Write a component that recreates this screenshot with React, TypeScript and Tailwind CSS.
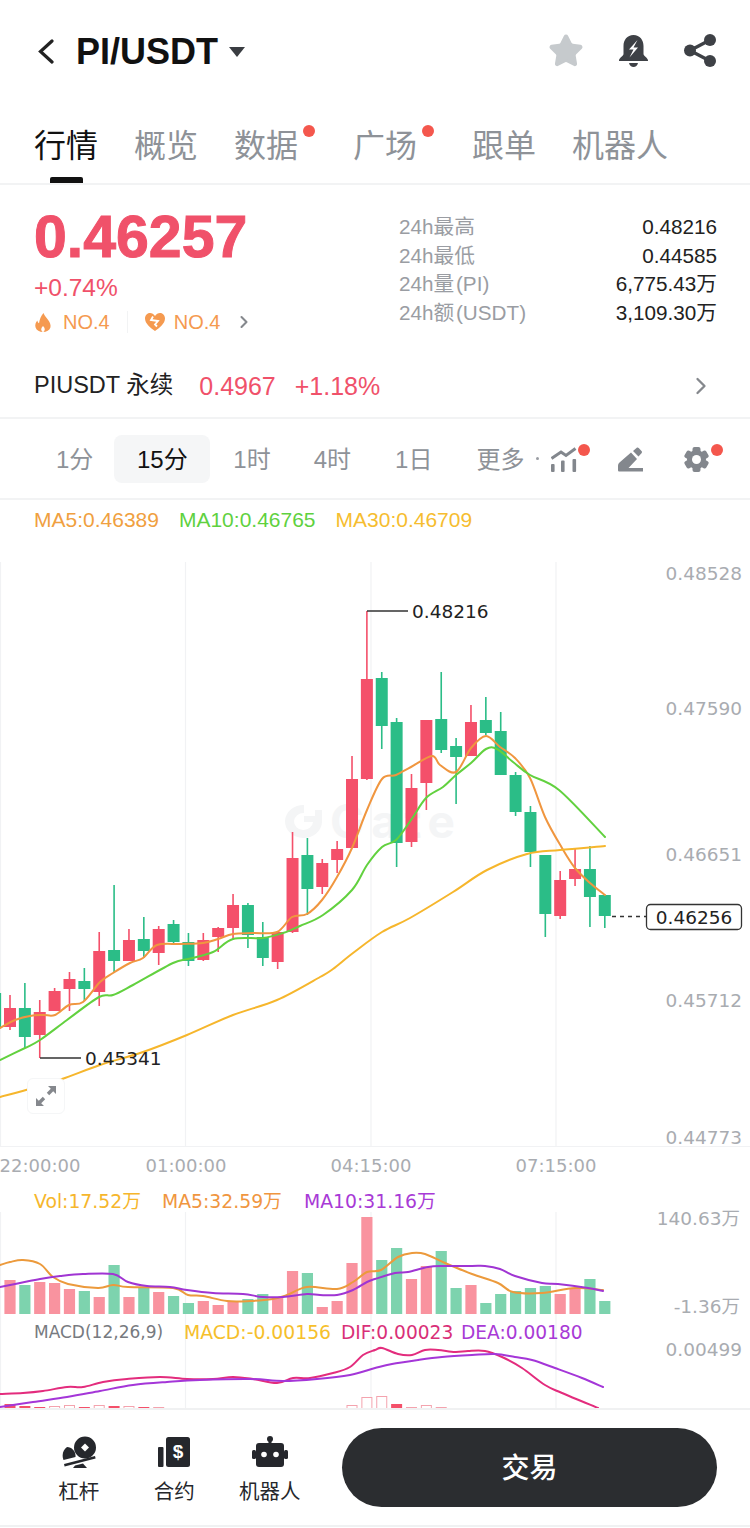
import { Star, ChevronRight } from 'lucide-react';

const UP = '#f4506a';
const DOWN = '#2bbd87';
const UP_VOL = '#f9939f';
const DOWN_VOL = '#7dd3ae';
const SANS = 'font-["Liberation_Sans","Noto_Sans_CJK_SC",sans-serif]';
const CHART_FONT = '"DejaVu Sans","Noto Sans CJK SC",sans-serif';

const tabs = [
  { label: '行情', active: true },
  { label: '概览' },
  { label: '数据', dot: true },
  { label: '广场', dot: true },
  { label: '跟单' },
  { label: '机器人' },
];

const stats = [
  ['24h最高', '0.48216'],
  ['24h最低', '0.44585'],
  ['24h量 (PI)', '6,775.43万'],
  ['24h额 (USDT)', '3,109.30万'],
];

// candle index -1 starts just off the left edge; [up, wickTop, wickBottom, bodyTop, bodyBottom]
type Candle = [boolean, number, number, number, number];
const candles: Candle[] = [
  [false, 993, 1030, 993, 1028],
  [true, 995, 1030, 1008, 1027],
  [false, 983, 1048, 1008, 1037],
  [true, 1000, 1058, 1012, 1035],
  [true, 988, 1011, 991, 1011],
  [true, 972, 1011, 979, 989],
  [false, 968, 1001, 981, 989],
  [true, 932, 1006, 951, 992],
  [false, 885, 973, 950, 961],
  [true, 929, 961, 940, 961],
  [false, 917, 958, 939, 951],
  [true, 926, 965, 929, 953],
  [false, 920, 943, 924, 942],
  [false, 933, 966, 942, 961],
  [true, 933, 961, 940, 960],
  [true, 927, 952, 928, 937],
  [true, 894, 940, 905, 928],
  [false, 903, 948, 905, 935],
  [false, 922, 966, 937, 958],
  [true, 932, 969, 932, 962],
  [true, 832, 933, 858, 932],
  [false, 838, 915, 855, 889],
  [true, 859, 894, 863, 887],
  [true, 841, 873, 849, 860],
  [true, 756, 848, 779, 848],
  [true, 611, 780, 679, 779],
  [false, 672, 749, 678, 726],
  [false, 718, 867, 722, 843],
  [true, 774, 847, 788, 842],
  [true, 720, 810, 720, 783],
  [false, 672, 753, 719, 750],
  [false, 738, 804, 746, 757],
  [true, 705, 756, 722, 756],
  [false, 697, 735, 720, 733],
  [false, 712, 775, 731, 775],
  [false, 772, 816, 775, 812],
  [false, 806, 867, 812, 852],
  [false, 855, 937, 855, 914],
  [true, 871, 919, 880, 916],
  [true, 848, 886, 869, 879],
  [false, 846, 927, 869, 897],
  [false, 895, 928, 895, 916],
];
const candleX = (i: number) => 10 + 14.87 * (i - 1);

const ma5 = '0,1028 15,1020 30,1016 43,1015 55,1015 69,1005 83,1002 100,982 113,973 130,963 143,958 157,945 180,944 203,943 218,939 233,934 253,933 277,932 292,917 307,914 322,900 337,877 352,848 367,810 382,779 396,775 411,767 432,756 440,765 456,772 471,748 486,736 500,747 515,758 530,778 545,817 562,848 575,868 590,883 605,895';
const ma10 = '0,1060 25,1048 40,1040 67,1020 99,997 113,995 133,985 173,963 188,959 213,952 233,939 263,938 283,933 300,926 323,915 352,890 367,865 382,847 396,840 411,820 426,798 443,787 456,775 471,763 486,749 497,749 513,762 530,775 559,790 605,837';
const ma30 = '0,1097 33,1088 62,1079 100,1065 143,1052 187,1035 233,1015 277,1000 320,977 333,969 353,953 382,932 410,918 453,892 487,870 527,854 560,850 605,846';

// top of each volume bar, baseline is y = 1314
const volumes: [boolean, number][] = [
  [true, 1280], [false, 1285], [true, 1282], [true, 1283], [true, 1289], [false, 1291],
  [true, 1297], [false, 1265], [true, 1297], [false, 1287], [true, 1292], [false, 1296],
  [false, 1303], [true, 1301], [true, 1305], [true, 1301], [false, 1299], [false, 1294],
  [true, 1297], [true, 1271], [false, 1273], [true, 1307], [true, 1301], [true, 1263],
  [true, 1217], [false, 1260], [false, 1248], [true, 1279], [true, 1266], [false, 1251],
  [false, 1288], [true, 1285], [false, 1303], [false, 1294], [false, 1291], [false, 1288],
  [false, 1286], [true, 1294], [true, 1288], [false, 1279], [false, 1301],
];

const volMa5 = '0,1265 10,1262 23,1260 40,1264 53,1277 68,1284 98,1288 113,1285 128,1287 173,1288 188,1295 203,1296 227,1301 250,1301 273,1299 287,1295 307,1287 337,1289 353,1282 367,1272 381,1270 398,1257 412,1253 425,1254 445,1263 472,1274 498,1283 513,1292 542,1293 575,1288 603,1290';
const volMa10 = '0,1287 20,1283 40,1279 60,1276 83,1274 113,1274 128,1282 147,1286 170,1287 187,1290 213,1293 243,1294 263,1297 283,1297 307,1294 320,1295 337,1295 353,1290 367,1282 375,1279 395,1273 408,1272 428,1267 445,1266 472,1266 485,1266 500,1269 515,1276 542,1283 558,1284 588,1288 603,1291';
const dif = '0,1394 23,1393 43,1391 67,1387 83,1387 103,1382 127,1379 160,1377 187,1379 213,1379 233,1377 253,1379 277,1383 293,1378 310,1378 333,1373 350,1367 363,1355 375,1350 382,1348 398,1354 412,1355 425,1350 438,1350 455,1352 468,1351 485,1351 502,1357 522,1368 545,1385 562,1393 598,1408';
const dea = '0,1407 33,1402 67,1397 100,1391 133,1385 167,1382 200,1380 250,1379 283,1381 317,1379 350,1375 375,1368 392,1364 418,1360 442,1357 472,1355 495,1354 515,1357 532,1360 555,1368 582,1378 603,1387';

// MACD histogram along the bottom edge: [candle index, top, filled]
const histogram: [number, number, boolean][] = [
  [1, 1404, true], [2, 1406, true], [3, 1407, true], [4, 1406, false], [5, 1405, false],
  [6, 1407, true], [7, 1405, false], [8, 1406, true], [9, 1406, false], [10, 1407, true],
  [11, 1407, false], [24, 1405, false], [25, 1397, false], [26, 1396, false], [27, 1404, true],
  [28, 1407, false], [29, 1405, false], [30, 1407, false],
];

const priceAxis: [string, number][] = [
  ['0.48528', 573], ['0.47590', 708], ['0.46651', 854], ['0.45712', 1000], ['0.44773', 1137],
];
const timeAxis: [string, number][] = [
  ['22:00:00', 40], ['01:00:00', 186], ['04:15:00', 371], ['07:15:00', 556],
];
const gridX = [0.5, 185.5, 371, 556];

// Catmull-Rom through the sampled points so the averages curve like a real chart
function smoothPath(points: string) {
  const p = points.split(' ').map((s) => s.split(',').map(Number));
  let d = `M${p[0][0]} ${p[0][1]}`;
  for (let i = 0; i < p.length - 1; i++) {
    const a = p[Math.max(i - 1, 0)];
    const b = p[i];
    const c = p[i + 1];
    const e = p[Math.min(i + 2, p.length - 1)];
    const c1x = b[0] + (c[0] - a[0]) / 6;
    const c1y = b[1] + (c[1] - a[1]) / 6;
    const c2x = c[0] - (e[0] - b[0]) / 6;
    const c2y = c[1] - (e[1] - b[1]) / 6;
    d += `C${c1x.toFixed(1)} ${c1y.toFixed(1)} ${c2x.toFixed(1)} ${c2y.toFixed(1)} ${c[0]} ${c[1]}`;
  }
  return d;
}

function ChartLabel({ x, y, fill, anchor, size, children }: { x: number; y: number; fill: string; anchor?: 'start' | 'middle' | 'end'; size?: number; children: string }) {
  return (
    <text x={x} y={y} fill={fill} textAnchor={anchor ?? 'start'} dominantBaseline="central" fontSize={size ?? 18.5} fontFamily={CHART_FONT}>
      {children}
    </text>
  );
}

function Line({ points, color }: { points: string; color: string }) {
  return <path d={smoothPath(points)} fill="none" stroke={color} strokeWidth="2" strokeLinejoin="round" strokeLinecap="round" />;
}

function Chart() {
  return (
    <svg width="750" height="868" viewBox="0 540 750 868" className="block">
      {gridX.map((x) => (
        <g key={x} stroke="#f1f2f4" strokeWidth="1.2">
          <line x1={x} x2={x} y1={562} y2={1146} />
          <line x1={x} x2={x} y1={1212} y2={1408} />
        </g>
      ))}
      <line x1={0} x2={750} y1={1146.5} y2={1146.5} stroke="#f1f2f4" strokeWidth="1.2" />

      {/* watermark */}
      <g fill="#f4f5f6">
        <path d="M322 822a18.500 16.500 0 1 1-18-17v8a9.500 8.500 0 1 0 9 9Z" />
        <path d="M304 822h18v-12h-7v6h-11Z" />
        <text x="330" y="838" fontSize="46" fontWeight="700" textLength="125" fontFamily="Inter, sans-serif">Gate</text>
      </g>

      {/* candles */}
      {candles.map(([up, wt, wb, bt, bb], i) => {
        const x = candleX(i);
        const color = up ? UP : DOWN;
        return (
          <g key={i} fill={color}>
            <rect x={x - 0.8} y={wt} width={1.6} height={wb - wt} />
            <rect x={x - 6} y={bt} width={12} height={bb - bt} />
          </g>
        );
      })}
      <Line points={ma5} color="#f0963f" />
      <Line points={ma10} color="#62d13f" />
      <Line points={ma30} color="#f6b62c" />

      {/* high / low markers */}
      <path d="M367 611h41M40 1058h41" stroke="#333" strokeWidth="1.5" fill="none" />
      <ChartLabel x={412} y={611} fill="#222">0.48216</ChartLabel>
      <ChartLabel x={85} y={1058} fill="#222">0.45341</ChartLabel>

      {/* last price tag */}
      <line x1={612} x2={646} y1={916.5} y2={916.5} stroke="#333" strokeWidth="1.3" strokeDasharray="4 4" />
      <rect x={646.5} y={904.5} width={95} height={25} rx={4} fill="#fff" stroke="#333" strokeWidth="1.3" />
      <ChartLabel x={694} y={917} fill="#222" anchor="middle">0.46256</ChartLabel>

      {priceAxis.map(([label, y]) => (
        <ChartLabel key={label} x={742} y={y} fill="#a9acb1" anchor="end">{label}</ChartLabel>
      ))}
      {timeAxis.map(([label, x]) => (
        <ChartLabel key={label} x={x} y={1165} fill="#a9acb1" anchor="middle" size={18}>{label}</ChartLabel>
      ))}

      {/* volume pane */}
      <ChartLabel x={34} y={1201} fill="#f6b62c" size={18.8}>Vol:17.52万</ChartLabel>
      <ChartLabel x={162} y={1201} fill="#f0963f" size={18.8}>MA5:32.59万</ChartLabel>
      <ChartLabel x={304} y={1201} fill="#a83ad6" size={18.8}>MA10:31.16万</ChartLabel>
      {volumes.map(([up, top], i) => (
        <rect key={i} x={candleX(i + 1) - 5.6} y={top} width={11.2} height={1314 - top} fill={up ? UP_VOL : DOWN_VOL} />
      ))}
      <Line points={volMa5} color="#ec9a3c" />
      <Line points={volMa10} color="#a035d3" />
      <ChartLabel x={740} y={1218} fill="#a9acb1" anchor="end">140.63万</ChartLabel>
      <ChartLabel x={740} y={1306} fill="#a9acb1" anchor="end">-1.36万</ChartLabel>

      {/* MACD pane */}
      <ChartLabel x={34} y={1332} fill="#777a80" size={17}>MACD(12,26,9)</ChartLabel>
      <ChartLabel x={184} y={1332} fill="#f6bf2c" size={18.8}>MACD:-0.00156</ChartLabel>
      <ChartLabel x={341} y={1332} fill="#d92f78" size={18.6}>DIF:0.00023</ChartLabel>
      <ChartLabel x={461} y={1332} fill="#a83ad6" size={18.6}>DEA:0.00180</ChartLabel>
      <ChartLabel x={742} y={1349} fill="#a9acb1" anchor="end">0.00499</ChartLabel>
      {histogram.map(([i, top, filled]) =>
        filled ? (
          <rect key={i} x={candleX(i) - 5.5} y={top} width={11} height={1408 - top} fill={UP} />
        ) : (
          <rect key={i} x={candleX(i) - 5} y={top + 0.5} width={10} height={1409 - top} fill="#fff" stroke="#f4a3ae" />
        ),
      )}
      <Line points={dif} color="#e32c7d" />
      <Line points={dea} color="#a436d8" />
    </svg>
  );
}

function BackIcon() {
  return (
    <svg width="17" height="25" viewBox="0 0 17 25">
      <path d="M15 2 3.500 12.500 15 23" fill="none" stroke="#222" strokeWidth="3.200" strokeLinecap="round" />
    </svg>
  );
}

function BellIcon() {
  return (
    <svg width="29" height="32" viewBox="0 0 29 32">
      <path fill="#3e4146" d="M14.500 0C21 0 24.500 5 24.500 11v8c0 2 4.500 4 4.500 6.500v.5H0v-.5C0 23 4.500 21 4.500 19v-8C4.500 5 8 0 14.500 0Z" />
      <path fill="#3e4146" d="M10 28h9c-.5 2.500-2.500 4-4.500 4S10.500 30.500 10 28Z" />
      <path fill="#fff" d="M18.500 5 10 14.500h4.500L10.500 22.500l8.500-10h-4.500L18.500 5Z" />
    </svg>
  );
}

function ShareIcon() {
  return (
    <svg width="32" height="33" viewBox="0 0 32 33">
      <path d="M26 6 6 16.500 26 27" fill="none" stroke="#3e4146" strokeWidth="3.400" />
      <circle cx="26" cy="6" r="6" fill="#3e4146" />
      <circle cx="6" cy="16.500" r="6" fill="#3e4146" />
      <circle cx="26" cy="27" r="6" fill="#3e4146" />
    </svg>
  );
}

function FlameIcon() {
  return (
    <svg width="18" height="19" viewBox="0 0 18 19">
      <path fill="#f59a50" d="M9.500 0c1 3 3 4.500 5 7.500 1.300 2 2.600 4.500 1.900 7-.9 2.800-3.900 4.500-7.400 4.500S2.500 17.300 1.600 14.500C.8 12 1.500 9.500 3.500 7.500c0 1.300.6 2.300 1.500 2.800C5.500 6.300 7 3 9.500 0Z" />
      <path fill="#fff" d="M9 13c.9.900 1.700 2 1.700 3.300S10 19 9 19s-1.700-1.400-1.700-2.700S8.100 13.900 9 13Z" />
    </svg>
  );
}

function BrokenHeartIcon() {
  return (
    <svg width="20" height="18" viewBox="0 0 20 18">
      <path fill="#f59a50" d="M10 3C11.300 1 13 0 15 0c3 0 5 2.500 5 5.500 0 5-5.500 9.500-10 12.500C5.500 15 0 10.500 0 5.500 0 2.500 2 0 5 0c2 0 3.700 1 5 3Z" />
      <path fill="none" stroke="#fff" strokeWidth="1.800" d="M8 3.500l-2 3.500 7 1-3 3.500 2 2" />
    </svg>
  );
}

function IndicatorIcon() {
  return (
    <svg width="26" height="25" viewBox="0 0 26 25" fill="#83878d">
      <path d="M.5 11.500 10 5l5 3.500L24.500 1.500" fill="none" stroke="#83878d" strokeWidth="3" />
      <rect x="0" y="17" width="3.600" height="8" rx="1" />
      <rect x="10" y="13.500" width="3.600" height="11.500" rx="1" />
      <rect x="21.500" y="12" width="3.600" height="13" rx="1" />
    </svg>
  );
}

function PencilIcon() {
  return (
    <svg width="25" height="25" viewBox="0 0 25 25" fill="#83878d">
      <path d="M1.500 15.500 13 5.500l6 6.500-8.500 9H25v3.500H1.500C.6 24.500 0 24 0 23v-4c0-1.400.5-2.600 1.500-3.500Z" />
      <path d="M15 4l3.500-3c.7-.6 1.500-.6 2.200.1l2.800 2.900c.7.7.6 1.500 0 2.200l-3 3.300L15 4Z" />
    </svg>
  );
}

function GearIcon() {
  return (
    <svg width="25" height="25" viewBox="0 0 25 25" fill="#83878d">
      <circle cx="12.500" cy="12.500" r="9.500" />
      {[0, 60, 120, 180, 240, 300].map((deg) => (
        <rect key={deg} x="8.500" y="0" width="8" height="6" rx="2" transform={`rotate(${deg} 12.500 12.500)`} />
      ))}
      <circle cx="12.500" cy="12.500" r="4.500" fill="#fff" />
    </svg>
  );
}

function RedDot({ className }: { className: string }) {
  return <span className={`absolute size-[12px] rounded-full bg-[#f4574d] ${className}`} />;
}

function LeverageIcon() {
  return (
    <svg width="34" height="32" viewBox="0 0 34 32" fill="#25272c">
      <path fillRule="evenodd" d="M23 .5a11 11 0 1 1 0 22 11 11 0 0 1 0-22Zm0 7-4 4 4 4 4-4-4-4Z" />
      <path d="M5 11c5 0 9 4.500 8.500 10L1.500 24C-.5 19 1 14 5 11Z" />
      <path d="M2 28 33 20l.6 2.400L2.600 30.400Z" />
      <path d="M13 29.500l8-2 4 4.500H11Z" />
    </svg>
  );
}

function ContractIcon() {
  return (
    <svg width="32" height="30" viewBox="0 0 32 30" fill="#25272c">
      <rect x="0" y="10" width="5.500" height="20" rx="1" />
      <rect x="8" y="0" width="24" height="30" rx="2.500" />
      <text x="20" y="21" textAnchor="middle" fontSize="19" fontWeight="700" fill="#fff" fontFamily="Liberation Sans, sans-serif">$</text>
    </svg>
  );
}

function RobotIcon() {
  return (
    <svg width="36" height="31" viewBox="0 0 36 31" fill="#25272c">
      <circle cx="18" cy="3" r="3" />
      <rect x="16.500" y="4" width="3" height="5" />
      <rect x="4" y="7" width="28" height="24" rx="3" />
      <rect x="0" y="14" width="4" height="9" rx="1.500" />
      <rect x="32" y="14" width="4" height="9" rx="1.500" />
      <circle cx="12" cy="18.500" r="2.800" fill="#fff" />
      <circle cx="24" cy="18.500" r="2.800" fill="#fff" />
    </svg>
  );
}

export default function App() {
  return (
    <div className={`relative flex h-[1528px] w-[750px] flex-col overflow-hidden bg-white ${SANS}`}>
      {/* Title bar */}
      <header className="flex h-[100px] items-center pt-[1px] pr-[34px] pl-[37px]">
        <span className="flex pt-[1px]"><BackIcon /></span>
        <h1 className="mt-[3px] ml-[22px] text-[36px] leading-none font-bold text-[#111]">PI/USDT</h1>
        <span className="mt-[3px] ml-[11px] h-0 w-0 border-x-[8px] border-t-[10px] border-x-transparent border-t-[#3a3d42]" />
        <div className="ml-auto flex items-center">
          <Star className="size-[36px] fill-[#c6cacd] text-[#c6cacd]" strokeWidth={2} />
          <span className="mr-[36px] ml-[35px] flex"><BellIcon /></span>
          <ShareIcon />
        </div>
      </header>

      {/* Tabs */}
      <nav className="flex h-[85px] gap-[36px] border-b-2 border-[#f2f3f4] pl-[34px]">
        {tabs.map((tab) => (
          <div key={tab.label} className={`relative pt-[23px] ${tab.dot ? 'pr-[19px]' : ''}`}>
            <span className={`text-[32px] leading-[46px] ${tab.active ? 'text-[#111]' : 'text-[#8e9298]'}`}>{tab.label}</span>
            {tab.dot && <RedDot className="top-[25px] right-[2px]" />}
            {tab.active && <span className="absolute bottom-0 left-[16px] h-[6px] w-[33px] rounded-t-[2px] bg-[#111]" />}
          </div>
        ))}
      </nav>

      {/* Price summary */}
      <section className="flex h-[176px] justify-between pr-[33px] pl-[34px]">
        <div>
          <div className="mt-[21px] text-[59px] leading-[62px] font-bold text-[#f0516a] [-webkit-text-stroke:1px_#f0516a]">0.46257</div>
          <div className="mt-[7px] text-[24.5px] leading-[26px] text-[#f0516a]">+0.74%</div>
          <div className="mt-[9px] flex items-center text-[20px] leading-[24px] text-[#f59a50]">
            <FlameIcon />
            <span className="ml-[11px]">NO.4</span>
            <span className="mx-[17px] h-[22px] w-px bg-[#f2f3f4]" />
            <BrokenHeartIcon />
            <span className="ml-[9px]">NO.4</span>
            <ChevronRight className="ml-[14px] size-[20px] text-[#85888d]" strokeWidth={2.5} />
          </div>
        </div>
        <dl className="mt-[27.500px] flex w-[318px] flex-col">
          {stats.map(([label, value]) => (
            <div key={label} className="flex h-[28.500px] items-center justify-between text-[20.700px]">
              <dt className="text-[#9a9da3] [word-spacing:-4px]">{label}</dt>
              <dd className="text-[#222]">{value}</dd>
            </div>
          ))}
        </dl>
      </section>

      {/* Perpetual link */}
      <section className="flex h-[58px] items-center border-b-2 border-[#f2f3f4] pr-[35px] pb-[6px] pl-[34px] leading-none">
        <span className="text-[23.500px] text-[#222]">PIUSDT 永续</span>
        <span className="ml-[26px] text-[25px] text-[#f0516a]">0.4967</span>
        <span className="ml-[19px] text-[25px] text-[#f0516a]">+1.18%</span>
        <ChevronRight className="ml-auto size-[28px] text-[#85888d]" strokeWidth={2} />
      </section>

      {/* Interval selector */}
      <section className="flex h-[81px] items-center border-b-2 border-[#f2f3f4] pl-[56px] text-[24px] text-[#8e9298]">
        <span className="pt-[2px]">1分</span>
        <span className="ml-[21px] flex h-[48px] w-[96px] items-center justify-center rounded-[8px] bg-[#f5f6f7] pt-[2px] text-[#111]">15分</span>
        <span className="ml-[23px] pt-[2px]">1时</span>
        <span className="ml-[43px] pt-[2px]">4时</span>
        <span className="ml-[44px] pt-[2px]">1日</span>
        <span className="ml-[44px] pt-[2px]">更多</span>
        <span className="ml-[12px] size-[3px] rounded-full bg-[#9a9da3]" />
        <div className="ml-[12px] flex items-center pt-[1px]">
          <span className="relative flex"><IndicatorIcon /><RedDot className="-top-[3px] left-[27px]" /></span>
          <span className="ml-[41px] flex"><PencilIcon /></span>
          <span className="relative ml-[41px] flex"><GearIcon /><RedDot className="-top-[3px] left-[27px]" /></span>
        </div>
      </section>

      {/* MA legend */}
      <div className="flex h-[40px] items-center pb-[2px] pl-[34px] text-[21px] leading-none">
        <span className="text-[#f0a040]">MA5:0.46389</span>
        <span className="ml-[20px] text-[#5fd13f]">MA10:0.46765</span>
        <span className="ml-[20px] text-[#f6bd30]">MA30:0.46709</span>
      </div>

      {/* Chart */}
      <div className="relative">
        <Chart />
        <button className="absolute top-[538px] left-[27px] flex h-[36px] w-[38px] items-center justify-center rounded-[6px] border border-[#f5f6f7] bg-white">
          <svg width="20" height="20" viewBox="0 0 20 20" fill="#85888d">
            <path d="M12 0h8v8l-2.800-2.800-4 4-2.400-2.400 4-4L12 0Z" />
            <path d="M8 20H0v-8l2.800 2.800 4-4 2.400 2.400-4 4L8 20Z" />
          </svg>
        </button>
      </div>

      {/* Bottom action bar */}
      <footer className="flex h-[119px] items-center border-y-2 border-[#f0f1f2] pr-[33px]">
        <div className="flex pt-[2px] pl-[31px] text-[20.500px] leading-[24px] text-[#25272c]">
          <div className="flex w-[95.500px] flex-col items-center gap-[10px]"><span className="flex h-[36px] items-center"><LeverageIcon /></span>杠杆</div>
          <div className="flex w-[95.500px] flex-col items-center gap-[10px]"><span className="flex h-[36px] items-center"><ContractIcon /></span>合约</div>
          <div className="flex w-[95.500px] flex-col items-center gap-[10px]"><span className="flex h-[36px] items-center"><RobotIcon /></span>机器人</div>
        </div>
        <button className="ml-auto h-[79px] w-[375px] rounded-full bg-[#2b2d30] pt-[2px] text-[28px] font-medium text-white">交易</button>
      </footer>
    </div>
  );
}
